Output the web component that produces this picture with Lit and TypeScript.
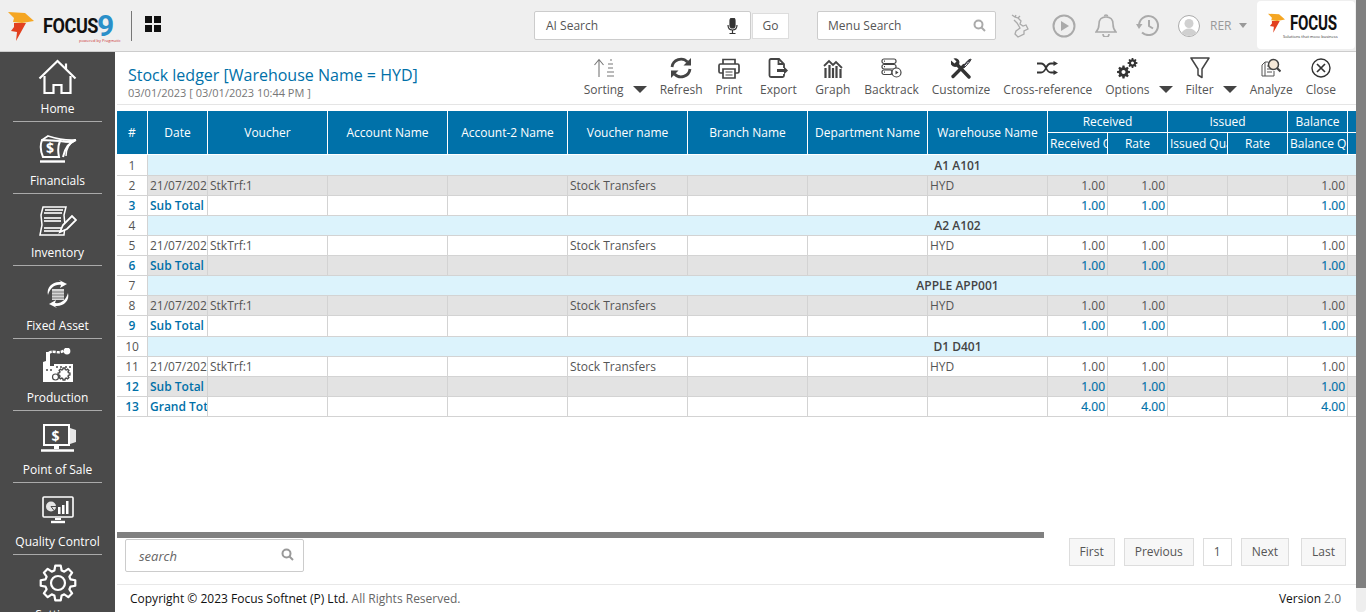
import { LitElement, html, css, nothing } from 'lit';
import { customElement } from 'lit/decorators.js';

// gear outline as a path, used by settings and options icons
function gearPath(cx: number, cy: number, rOut: number, rIn: number, teeth: number) {
  const pts: string[] = [];
  const step = (Math.PI * 2) / teeth;
  for (let i = 0; i < teeth; i++) {
    const a = i * step - Math.PI / 2;
    const list: [number, number][] = [
      [rIn, a - step * 0.36],
      [rOut, a - step * 0.2],
      [rOut, a + step * 0.2],
      [rIn, a + step * 0.36],
    ];
    for (const [r, t] of list) {
      pts.push(`${(cx + r * Math.cos(t)).toFixed(2)} ${(cy + r * Math.sin(t)).toFixed(2)}`);
    }
  }
  return 'M' + pts.join('L') + 'Z';
}

const navIcons = {
  home: html`<svg width="40" height="37" viewBox="0 0 40 37" fill="none" stroke="#fff" stroke-width="2.2">
    <path d="M1.5 19.5 19.5 2l18 17.5" stroke-linejoin="miter"/>
    <path d="M28 10V4.5" />
    <path d="M6.500 17v17h9v-8h8v8h9V17"/>
  </svg>`,
  fin: html`<svg width="38" height="28" viewBox="0 0 38 28" fill="none" stroke="#fff">
    <path d="M3 5 Q0 13 4 22H20Q18 13 21 6Z" stroke-width="2"/>
    <text x="7" y="18" font-family="Open Sans" font-weight="700" font-size="14" fill="#fff" stroke="none">$</text>
    <path d="M3 5 9 1Q24 6 37 5" stroke-width="1.600"/>
    <path d="M21 6Q30 8 37 5Q27 8 24 22" stroke-width="2"/>
    <path d="M24 6Q31 8 36 5.500Q27 10 27 21" stroke-width="1.400"/>
    <path d="M1 26.500H26" stroke-width="2.400"/>
  </svg>`,
  inv: html`<svg width="38" height="32" viewBox="0 0 38 32" fill="none" stroke="#fff" stroke-width="1.500">
    <path d="M4 2H27L25 10 26 20 25 30H1L3 20 2 10Z"/>
    <path d="M6 5H24M5 8H23" stroke-width="2.200" stroke="#ddd"/>
    <path d="M5 13H22M5 16H22M5 23H23M5 26H23" stroke-width="2.200" stroke="#ddd"/>
    <path d="M21 27 24 20 33 11 37 15 28 24Z" fill="#4a4a4a" stroke-width="1.800"/>
  </svg>`,
  asset: html`<svg width="26" height="28" viewBox="0 0 26 28" fill="none">
    <path d="M3 15C1 7 8 1 16 2L14 0 22 4 15 8 16 5C10 4 5 8 3 15Z" fill="#fff"/>
    <path d="M23 13C25 21 18 27 10 26L12 28 4 24 11 20 10 23C16 24 21 20 23 13Z" fill="#fff"/>
    <path d="M7 9h12v11H7z" fill="#d6d6d6"/>
    <path d="M7 12h12M7 15h12M7 18h12" stroke="#777" stroke-width="1"/>
  </svg>`,
  prod: html`<svg width="32" height="36" viewBox="0 0 32 36">
    <path d="M1 34V14L4 13V4H8V18H12V16H31V34Z" fill="#fff"/>
    <path d="M7 5Q9 3 14 4T23 2" fill="none" stroke="#fff" stroke-width="2.500" stroke-dasharray="3 1"/>
    <circle cx="25" cy="3" r="3.400" fill="#fff"/>
    <path d="${gearPath(22, 26, 6, 4.600, 8)}" fill="none" stroke="#4a4a4a" stroke-width="1.400"/>
    <circle cx="13.500" cy="29" r="3" fill="none" stroke="#4a4a4a" stroke-width="1.200"/>
    <path d="M4 22h2M8 22h2M14 19h2M18 19h2M23 19h2M27 19h2" stroke="#4a4a4a" stroke-width="1.400"/>
  </svg>`,
  pos: html`<svg width="36" height="28" viewBox="0 0 36 28" fill="none">
    <path d="M4 1H29V21H4Z" stroke="#fff" stroke-width="2"/>
    <path d="M30 4 36 6V18L30 20Z" fill="#e6e6e6"/>
    <text x="11.500" y="17" font-family="Open Sans" font-weight="700" font-size="14" fill="#fff">$</text>
    <path d="M14 22h5v3h-5z" fill="#fff"/>
    <path d="M1 26.500H34" stroke="#fff" stroke-width="2.400"/>
  </svg>`,
  qc: html`<svg width="32" height="28" viewBox="0 0 32 28" fill="none">
    <rect x="1" y="1" width="30" height="20" rx="1" stroke="#fff" stroke-width="1.600"/>
    <circle cx="9" cy="10.500" r="5" fill="#e6e6e6"/>
    <path d="M9 10.500h5M9 10.500l3 4" stroke="#4a4a4a" stroke-width="1"/>
    <path d="M16 11h2.500v7H16zM20 9h2.500v9H20zM24 5h2.500v13H24z" fill="#fff"/>
    <path d="M13 22h6v2h-6z" fill="#fff"/>
    <path d="M9 26H23" stroke="#fff" stroke-width="2.400"/>
  </svg>`,
  gear: html`<svg width="38" height="38" viewBox="0 0 38 38" fill="none" stroke="#fff" stroke-width="2.200">
    <path d="${gearPath(19, 19, 17.500, 13, 8)}" stroke-linejoin="round"/>
    <circle cx="19" cy="19" r="7"/>
  </svg>`,
};

const toolIcons = {
  sort: html`<svg width="22" height="20" viewBox="0 0 22 20" fill="none" stroke="#777" stroke-width="1.100">
    <path d="M6 19V2M1.500 7 6 1.500 10.500 7"/><path d="M17 2h2M15 6h5M15 10h5M14 14h7M14 18h7"/>
  </svg>`,
  refresh: html`<svg width="22" height="22" viewBox="0 0 22 22" fill="none" stroke="#444" stroke-width="2.800">
    <path d="M2 10A9 9 0 0 1 17.500 5"/><path d="M20 12A9 9 0 0 1 4.500 17"/>
    <path d="M21 1v7.500h-7.500z" fill="#444" stroke="none"/><path d="M1 21v-7.500h7.500z" fill="#444" stroke="none"/>
  </svg>`,
  print: html`<svg width="22" height="21" viewBox="0 0 22 21" fill="none" stroke="#444" stroke-width="1.700">
    <path d="M5 6V1.500H17V6"/><path d="M5 15H2.500Q1 15 1 13.500V7.500Q1 6 2.500 6H19.500Q21 6 21 7.500V13.500Q21 15 19.500 15H17"/>
    <path d="M5 11H17V20H5Z"/><path d="M7.500 14h7M7.500 17h7" stroke-width="1"/>
  </svg>`,
  exp: html`<svg width="20" height="20" viewBox="0 0 20 20" fill="none" stroke="#444" stroke-width="1.800">
    <path d="M16 10V6L11 1H3Q1.500 1 1.500 2.500V17.500Q1.500 19 3 19H14.500Q16 19 16 17.500V16"/>
    <path d="M10.500 1.500V6H15.500"/><path d="M9 11h7V8.500l4 4-4 4V14H9z" fill="#444" stroke="none"/>
  </svg>`,
  graph: html`<svg width="20" height="19" viewBox="0 0 20 19" fill="none" stroke="#444">
    <path d="M1 7 6 2l4 4 3-3 6 6" stroke-width="1.800"/>
    <path d="M2.500 19V9M6.500 19V6M10 19V9M13.500 19V7M17.500 19V10" stroke-width="2.200"/>
  </svg>`,
  back: html`<svg width="21" height="20" viewBox="0 0 21 20" fill="none" stroke="#444" stroke-width="1.200">
    <rect x="1" y="1" width="14" height="4.500" rx="2"/><rect x="1" y="6.500" width="14" height="4.500" rx="2"/><rect x="1" y="12" width="10" height="4.500" rx="2"/>
    <path d="M3 3.200h1M3 8.700h1M3 14.200h1"/>
    <circle cx="15.500" cy="14.500" r="4.500" fill="#fff"/><path d="M14.500 12.500v4l3-2z" fill="#444" stroke="none"/>
  </svg>`,
  custom: html`<svg width="22" height="21" viewBox="0 0 22 21" fill="none">
    <path d="M7.500 7 19 19" stroke="#333" stroke-width="3.400" stroke-linecap="round"/>
    <path d="M1 2.500 4.500 5.500 6.500 3.500 3.500 .5Q8.500 -.5 9.500 4Q9.500 7 7.500 8.500Q3 10 1 6.500Z" fill="#333"/>
    <path d="M14 7.500 3 18.500" stroke="#333" stroke-width="3.400" stroke-linecap="round"/>
    <path d="M13 8 18 2.500 20.500 1 21 1.500 19.500 4 14.500 9.500Z" fill="#445" stroke="#333"/>
    <path d="M15 8 17 6M17 5.500l1.500-1.500" stroke="#fff" stroke-width=".9"/>
  </svg>`,
  cross: html`<svg width="21" height="14" viewBox="0 0 21 14" fill="none" stroke="#333" stroke-width="1.800">
    <path d="M0 2.500H4Q7 2.500 9 7T14 11.500H17"/><path d="M0 11.500H4Q7 11.500 9 7T14 2.500H17"/>
    <path d="M16.500 0 21 2.500 16.500 5ZM16.500 9 21 11.500 16.500 14Z" fill="#333" stroke="none"/>
  </svg>`,
  opts: html`<svg width="21" height="21" viewBox="0 0 21 21">
    <path fill-rule="evenodd" d="${gearPath(6.500, 14, 6.500, 4.800, 8)} M6.500 12a2 2 0 1 0 .01 0Z" fill="#333"/>
    <path fill-rule="evenodd" d="${gearPath(15.500, 5, 5, 3.700, 8)} M15.500 3.500a1.500 1.500 0 1 0 .01 0Z" fill="#333"/>
  </svg>`,
  filter: html`<svg width="20" height="22" viewBox="0 0 20 22" fill="none" stroke="#444" stroke-width="1.500">
    <path d="M1 1H19L12 12V20.500L8 18V12Z" stroke-linejoin="round"/>
  </svg>`,
  analyze: html`<svg width="20" height="20" viewBox="0 0 20 20" fill="none" stroke="#555" stroke-width="1">
    <path d="M4 4H7M1 7 4 4V18H13V13" /><path d="M1 7V18H4" />
    <path d="M6 8h3M6 11h4M6 14h5" />
    <circle cx="12.500" cy="6.500" r="5" fill="#f5e8d8" stroke="#444" stroke-width="1.500"/>
    <path d="M16 10 19.500 13.500" stroke="#444" stroke-width="2.200"/>
  </svg>`,
  close: html`<svg width="20" height="20" viewBox="0 0 20 20" fill="none" stroke="#333" stroke-width="1.400">
    <circle cx="10" cy="10" r="9"/><path d="M6 6 14 14M14 6 6 14" stroke-width="1.700"/>
  </svg>`,
};

const flame = (w: number, h: number) => html`<svg class="flame" width=${w} height=${h} viewBox="0 0 26 30">
  <path d="M0 0 17 1 26 9 14 11 5 10 6 6Z" fill="#f5a623"/>
  <path d="M6 11 18 11 8 29 9 20 3 19 6 15Z" fill="#e2401f"/>
</svg>`;

interface Tool { label: string; icon: keyof typeof toolIcons; caret?: boolean; extra?: string }
const tools: Tool[] = [
  { label: 'Sorting', icon: 'sort', caret: true },
  { label: 'Refresh', icon: 'refresh' },
  { label: 'Print', icon: 'print' },
  { label: 'Export', icon: 'exp', extra: 'wide' },
  { label: 'Graph', icon: 'graph', extra: 'pad' },
  { label: 'Backtrack', icon: 'back' },
  { label: 'Customize', icon: 'custom' },
  { label: 'Cross-reference', icon: 'cross' },
  { label: 'Options', icon: 'opts', caret: true },
  { label: 'Filter', icon: 'filter', caret: true },
  { label: 'Analyze', icon: 'analyze' },
  { label: 'Close', icon: 'close' },
];

const nav: { label: string; icon: keyof typeof navIcons }[] = [
  { label: 'Home', icon: 'home' },
  { label: 'Financials', icon: 'fin' },
  { label: 'Inventory', icon: 'inv' },
  { label: 'Fixed Asset', icon: 'asset' },
  { label: 'Production', icon: 'prod' },
  { label: 'Point of Sale', icon: 'pos' },
  { label: 'Quality Control', icon: 'qc' },
  { label: 'Settings', icon: 'gear' },
];

const widths = [31, 60, 120, 120, 120, 120, 120, 120, 120, 60, 60, 60, 60, 60, 420];
const groups = ['A1 A101', 'A2 A102', 'APPLE APP001', 'D1 D401'];

@customElement('app-root')
export class AppRoot extends LitElement {
  static styles = css`
    :host {
      display: flex;
      width: 1366px;
      height: 612px;
      overflow: hidden;
      font-family: 'Open Sans', sans-serif;
      font-size: 12px;
      color: #555;
      background: #fff;
    }

    .page { width: 1356px; height: 612px; display: flex; flex-direction: column; }

    /* ===== Scrollbar ===== */
    .vscroll { width: 10px; background: #eee; border-radius: 0 0 4px 4px; }
    .vthumb { height: 588px; background: #808080; }

    /* ===== Header ===== */
    .top {
      height: 52px;
      box-sizing: border-box;
      flex: none;
      background: #efefef;
      border-bottom: 1px solid #ccc;
      display: flex;
      align-items: center;
    }
    .brand { display: flex; align-items: center; margin-left: 8px; width: 123px; height: 30px; border-right: 1px solid #777; position: relative; }
    .brand .flame { margin-top: 3px; }
    .wordmark { font: 700 21px 'Roboto', sans-serif; color: #111; margin: 1px 0 0 9px; letter-spacing: -0.5px; transform: scaleX(0.86); transform-origin: left; width: 46px; white-space: nowrap; }
    .nine { font: 700 30px 'Roboto', sans-serif; color: #2a8fc9; margin-left: 8px; line-height: 30px; }
    .brand small { position: absolute; left: 71px; top: 27px; font-size: 4px; color: #c33; white-space: nowrap; }
    .grid { margin-left: 13px; width: 16px; height: 16px; display: grid; grid-template-columns: 7px 7px; gap: 2px; margin-top: -4px; }
    .grid i { background: #111; }
    .ai { margin-left: 373px; width: 217px; height: 29px; box-sizing: border-box; background: #fff; border: 1px solid #ccc; border-radius: 2px; display: flex; align-items: center; justify-content: space-between; padding: 0 12px 0 11px; }
    .go { margin-left: 1px; width: 37px; height: 26px; box-sizing: border-box; background: #fff; border: 1px solid #ddd; display: flex; align-items: center; justify-content: center; }
    .menu { margin-left: 28px; width: 179px; height: 29px; box-sizing: border-box; background: #fff; border: 1px solid #ccc; border-radius: 2px; display: flex; align-items: center; justify-content: space-between; padding: 0 9px 0 10px; }
    .ticons { display: flex; align-items: center; margin-left: 15px; width: 246px; }
    .ticons svg { flex: none; }
    .rer { color: #999; margin-left: 10px; }
    .tcaret { width: 0; height: 0; border: 4px solid transparent; border-top: 5px solid #999; margin: 4px 0 0 8px; }
    .flogo { width: 98px; height: 48px; flex: none; background: #fff; border-radius: 4px; margin-top: -1px; display: flex; position: relative; padding: 11px 0 0 11px; box-sizing: border-box; }
    .flogo .word { font: 700 21px 'Roboto', sans-serif; color: #111; margin-left: 5px; letter-spacing: -0.3px; transform: scaleX(0.72); transform-origin: left; line-height: 24px; margin-top: -1px; }
    .flogo small { position: absolute; left: 26px; top: 33px; font-size: 4px; color: #333; white-space: nowrap; }

    .body { flex: 1; display: flex; min-height: 0; }

    /* ===== Sidebar ===== */
    .side { width: 115px; flex: none; background: #4a4a4a; overflow: hidden; color: #fff; }
    .nav-item {
      height: 72.2px;
      box-sizing: border-box;
      margin: 0 13px;
      border-bottom: 1px solid #aaa;
      display: flex;
      flex-direction: column;
      align-items: center;
      justify-content: flex-end;
      white-space: nowrap;
      padding-bottom: 4px;
    }
    .nav-item:first-child { height: 70px; }
    .nav-item:last-child { border-bottom: 0; }
    .nav-ic { height: 40px; display: flex; align-items: center; justify-content: center; margin-bottom: 3px; }

    /* ===== Main ===== */
    .main { flex: 1; min-width: 0; display: flex; flex-direction: column; padding-left: 2px; }
    .bar { height: 53px; flex: none; box-sizing: border-box; border-bottom: 1px solid #e5e5e5; display: flex; justify-content: space-between; padding-left: 11px; }
    .title { margin-top: 13px; }
    .title h1 { margin: 0; font-size: 16px; font-weight: 500; line-height: 20px; color: #0070a8; white-space: nowrap; }
    .title p { margin: 1px 0 0; font-size: 11px; line-height: 14px; color: #777; }
    .tools { display: flex; gap: 13px; padding-right: 20px; }
    .tool { display: flex; align-items: flex-end; gap: 9px; }
    .tool.wide { margin: 0 5px 0 4px; min-width: 38px; justify-content: center; }
    .tool.pad { margin-right: 1px; }
    .tool-in { display: flex; flex-direction: column; align-items: center; }
    .tool-ic { height: 26px; display: flex; align-items: center; justify-content: center; }
    .tool-lb { line-height: 17px; white-space: nowrap; margin-bottom: 6px; }
    .caret { width: 0; height: 0; border: 7px solid transparent; border-top: 7px solid #444; border-bottom: 0; margin-bottom: 11px; }

    /* ===== Table ===== */
    .tbl-wrap { flex: 1; min-height: 0; overflow: hidden; padding-top: 6px; }
    table { border-collapse: separate; border-spacing: 0; table-layout: fixed; width: 1651px; }
    th, td { box-sizing: border-box; border-right: 1px solid #d3d3d3; border-bottom: 1px solid #d3d3d3; overflow: hidden; white-space: nowrap; padding: 0 2px; font-weight: 400; }
    th { background: #0071a9; color: #fff; text-align: center; border-color: #fff; height: 22px; }
    td { height: 20px; line-height: 14px; padding-top: 1px; }
    tr.tall td { height: 21px; }
    tr.nudge td { padding-top: 0; }
    td.num { text-align: center; background: #fff; }
    tr.alt td:not(.num) { background: #e3e3e3; }
    tr.group td:not(.num) { background: #dcf3fc; text-align: center; font-weight: 600; color: #444; }
    tr.sum td:not(.num) { color: #0070a8; font-weight: 600; }
    td.r { text-align: right; }
    tr.sum td.r { font-weight: 400; -webkit-text-stroke: 0.2px #0070a8; }
    tr.sum td.num { color: #0070a8; font-weight: 600; }

    .hbar { height: 6px; flex: none; width: 927px; background: #808080; }

    /* ===== Pager ===== */
    .pager { height: 46px; flex: none; display: flex; justify-content: space-between; padding: 1px 10px 0 8px; box-sizing: border-box; align-items: flex-start; }
    .search { width: 179px; height: 33px; box-sizing: border-box; border: 1px solid #ccc; border-radius: 2px; display: flex; align-items: center; justify-content: space-between; padding: 0 9px 0 13px; font-style: italic; font-size: 13px; color: #666; }
    .search svg { margin-top: -3px; }
    .pages { display: flex; gap: 9px; margin-top: -1px; }
    .pg { height: 28px; box-sizing: border-box; padding: 0 10px 2px; border: 1px solid #ddd; background: #f7f7f7; display: flex; align-items: center; }
    .pg.next { margin-right: 3px; }
    .pg.cur { background: #fff; }

    /* ===== Footer ===== */
    .foot { flex: none; height: 28px; box-sizing: border-box; border-top: 1px solid #e8e8e8; display: flex; justify-content: space-between; align-items: center; padding: 0 15px 0 13px; color: #666; }
    .foot b { font-weight: 500; color: #111; }
  `;

  private _mag(color: string) {
    return html`<svg width="13" height="13" viewBox="0 0 13 13" fill="none" stroke=${color} stroke-width="2">
      <circle cx="5.500" cy="5.500" r="4"/><path d="M8.500 8.500 12 12"/>
    </svg>`;
  }

  private _row(n: number, cells: unknown[], cls: string) {
    // rows 1 and 9 come out a pixel taller in the reference
    const tall = n === 1 ? ' tall' : n === 9 ? ' tall nudge' : '';
    return html`<tr class=${cls + tall}><td class="num">${n}</td>${cells}</tr>`;
  }

  private _dataCells(date: string, voucher: string, vname: string, wh: string, qty: string) {
    const blanks = (k: number) => Array.from({ length: k }, () => html`<td></td>`);
    return [
      html`<td>${date}</td><td>${voucher}</td>`,
      blanks(2),
      html`<td>${vname}</td>`,
      blanks(2),
      html`<td>${wh}</td>`,
      html`<td class="r">${qty}</td><td class="r">${qty}</td><td></td><td></td><td class="r">${qty}</td><td></td>`,
    ];
  }

  private _rows() {
    const rows: unknown[] = [];
    let n = 1;
    groups.forEach((name) => {
      rows.push(this._row(n, [html`<td colspan="14">${name}</td>`], 'group'));
      n++;
      rows.push(this._row(n, this._dataCells('21/07/2023', 'StkTrf:1', 'Stock Transfers', 'HYD', '1.00'), n % 2 === 0 ? 'alt' : ''));
      n++;
      rows.push(this._row(n, this._dataCells('Sub Total', '', '', '', '1.00'), n % 2 === 0 ? 'alt sum' : 'sum'));
      n++;
    });
    rows.push(this._row(n, this._dataCells('Grand Total', '', '', '', '4.00'), 'sum'));
    return rows;
  }

  render() {
    return html`
      <div class="page">
        <header class="top">
          <div class="brand">
            ${flame(26, 30)}
            <span class="wordmark">FOCUS</span>
            <span class="nine">9</span>
            <small>powered by Pragmatic</small>
          </div>
          <div class="grid"><i></i><i></i><i></i><i></i></div>
          <div class="ai">
            <span>AI Search</span>
            <svg width="11" height="16" viewBox="0 0 11 16" fill="none" stroke="#333" stroke-width="1.200">
              <rect x="3" y="0" width="5" height="10" rx="2.500" fill="#333"/>
              <path d="M1 7Q1 12 5.500 12T10 7M5.500 12V15M2.500 15.500H8.500"/>
            </svg>
          </div>
          <div class="go">Go</div>
          <div class="menu"><span>Menu Search</span>${this._mag('#aaa')}</div>
          <div class="ticons">
            <svg width="18" height="24" viewBox="0 0 18 24" fill="none" stroke="#aaa" stroke-width="1.300">
              <path d="M1 1 4 3 5 1M4 3 7 4 9 2M7 4 10 7 9 10 12 12 15 11 17 15 13 17 13 20 7 23 4 20 5 17 9 14 6 9 3 6"/>
            </svg>
            <svg style="margin-left:23px" width="24" height="24" viewBox="0 0 24 24" fill="none" stroke="#aaa" stroke-width="2">
              <circle cx="12" cy="12" r="10.500"/><path d="M9 7v10l8-5z" fill="#aaa" stroke="none"/>
            </svg>
            <svg style="margin-left:19px" width="22" height="23" viewBox="0 0 22 23" fill="none" stroke="#aaa" stroke-width="1.600">
              <path d="M1 18Q4 15 4 10Q4 3 11 3T18 10Q18 15 21 18Z"/><path d="M9.500 2.500a1.500 1.500 0 0 1 3 0M8 20a3 3 0 0 0 6 0"/>
            </svg>
            <svg style="margin-left:19px" width="23" height="21" viewBox="0 0 23 21" fill="none" stroke="#aaa" stroke-width="2">
              <path d="M3 10.500A9.500 9.500 0 1 1 6 17.500"/><path d="M0 8h6.500L3 13z" fill="#aaa" stroke="none" transform="translate(0 1)"/><path d="M13 5v6l4 2.500"/>
            </svg>
            <svg style="margin-left:19px" width="22" height="22" viewBox="0 0 22 22">
              <circle cx="11" cy="11" r="10.500" fill="#fff" stroke="#aaa"/>
              <circle cx="11" cy="8.500" r="4.500" fill="#d0d0d0"/><path d="M3.500 18Q6 13.500 11 13.500T18.500 18Q15 21 11 21T3.500 18Z" fill="#d0d0d0"/>
            </svg>
            <span class="rer">RER</span>
            <span class="tcaret"></span>
          </div>
          <div class="flogo">
            ${flame(20, 23)}
            <span class="word">FOCUS</span>
            <small>Solutions that move business</small>
          </div>
        </header>
        <div class="body">
          <nav class="side">
            ${nav.map(
              (n) => html`<div class="nav-item"><span class="nav-ic">${navIcons[n.icon]}</span><span>${n.label}</span></div>`
            )}
          </nav>
          <main class="main">
            <div class="bar">
              <div class="title">
                <h1>Stock ledger [Warehouse Name = HYD]</h1>
                <p>03/01/2023 [ 03/01/2023 10:44 PM ]</p>
              </div>
              <div class="tools">
                ${tools.map(
                  (t) => html`<div class="tool ${t.extra ?? ''}">
                    <div class="tool-in">
                      <span class="tool-ic">${toolIcons[t.icon]}</span>
                      <span class="tool-lb">${t.label}</span>
                    </div>
                    ${t.caret ? html`<span class="caret"></span>` : nothing}
                  </div>`
                )}
              </div>
            </div>
            <div class="tbl-wrap">
              <table>
                <colgroup>${widths.map((w) => html`<col style="width:${w}px" />`)}</colgroup>
                <thead>
                  <tr>
                    ${['#', 'Date', 'Voucher', 'Account Name', 'Account-2 Name', 'Voucher name', 'Branch Name', 'Department Name', 'Warehouse Name'].map(
                      (h) => html`<th rowspan="2">${h}</th>`
                    )}
                    <th colspan="2">Received</th>
                    <th colspan="2">Issued</th>
                    <th>Balance</th>
                    <th></th>
                  </tr>
                  <tr>
                    <th style="text-align:left">Received Quantity</th>
                    <th>Rate</th>
                    <th style="text-align:left">Issued Quantity</th>
                    <th>Rate</th>
                    <th style="text-align:left">Balance Quantity</th>
                    <th></th>
                  </tr>
                </thead>
                <tbody>${this._rows()}</tbody>
              </table>
            </div>
            <div class="hbar"></div>
            <div class="pager">
              <div class="search"><span>search</span>${this._mag('#999')}</div>
              <div class="pages">
                <span class="pg">First</span>
                <span class="pg">Previous</span>
                <span class="pg cur">1</span>
                <span class="pg next">Next</span>
                <span class="pg">Last</span>
              </div>
            </div>
            <footer class="foot">
              <span><b>Copyright © 2023 Focus Softnet (P) Ltd.</b> All Rights Reserved.</span>
              <span><b>Version</b> 2.0</span>
            </footer>
          </main>
        </div>
      </div>
      <div class="vscroll"><div class="vthumb"></div></div>
    `;
  }
}
